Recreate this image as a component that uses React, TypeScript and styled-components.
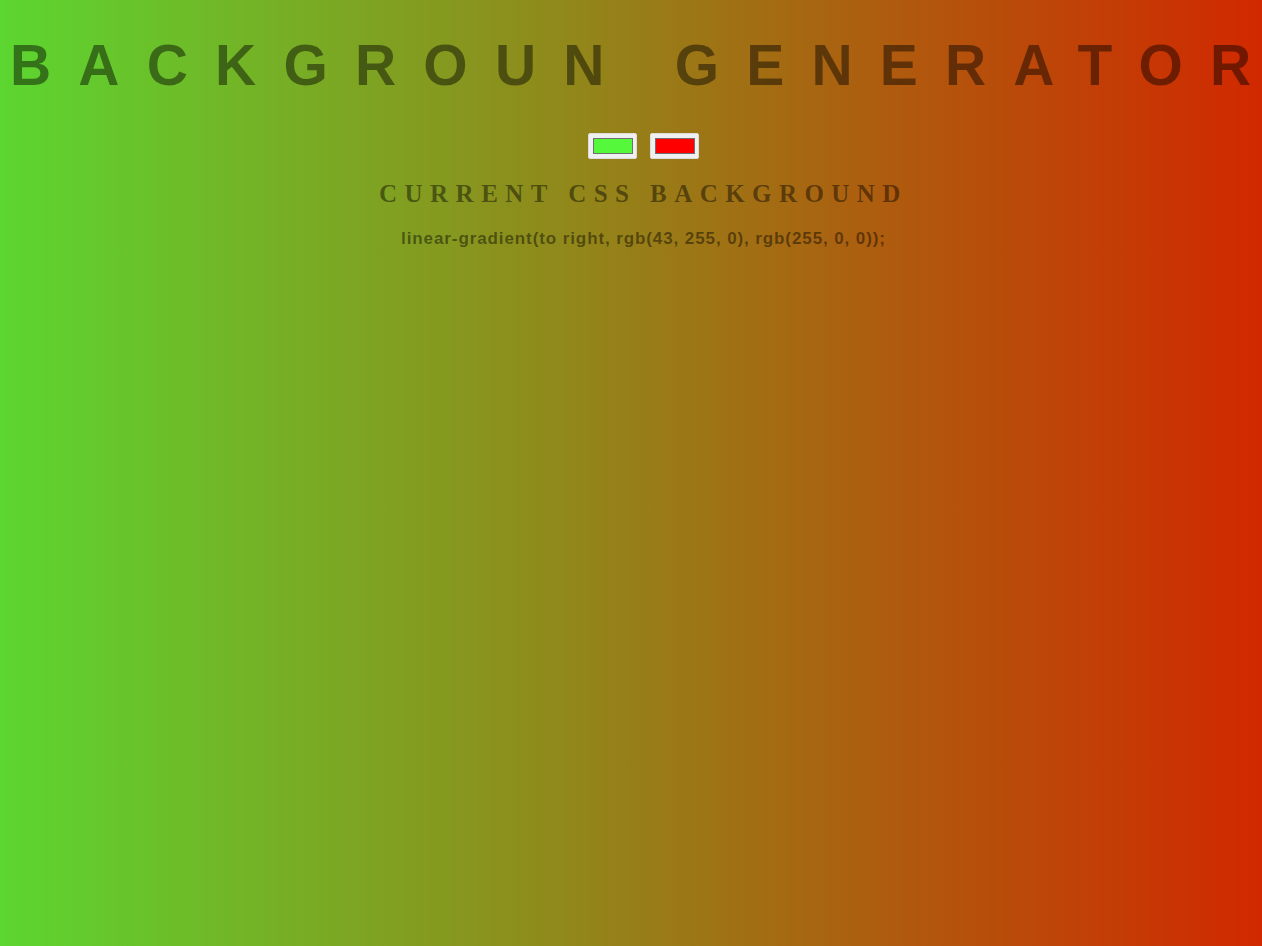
import styled, { createGlobalStyle } from "styled-components";

const GlobalStyle = createGlobalStyle`
  html, body {
    margin: 0;
    min-height: 100%;
  }
  body {
    min-height: 946px;
    overflow-x: hidden;
    background: linear-gradient(to right, #5cd630, #d12800);
    font-family: "Liberation Sans", Arial, sans-serif;
    color: rgba(0, 0, 0, 0.45);
    text-align: center;
  }
`;

const Page = styled.div`
  padding-top: 32px;
`;

const Title = styled.h1`
  margin: 0;
  padding-left: 10px;
  font-size: 57px;
  line-height: 66px;
  font-weight: bold;
  letter-spacing: 27.2px;
  white-space: nowrap;
  text-align: left;
`;

const Panel = styled.div`
  display: flex;
  flex-direction: column;
  align-items: center;
  padding-left: 25px;
`;

const Controls = styled.div`
  display: flex;
  gap: 13px;
  margin-top: 35px;
`;

const ColorInput = styled.input`
  box-sizing: border-box;
  width: 49px;
  height: 26px;
  padding: 0;
  border: 1px solid #dcdcdc;
  border-radius: 2px;
  background: #f0f0f0;
  cursor: pointer;

  &::-webkit-color-swatch-wrapper {
    padding: 4px 3.5px;
  }
  &::-webkit-color-swatch {
    border: 1px solid #6f6f6f;
    border-radius: 0;
  }
`;

const Subtitle = styled.h3`
  margin: 20px 0 0;
  font-family: "Liberation Serif", "Times New Roman", serif;
  font-size: 25px;
  line-height: 29px;
  font-weight: bold;
  letter-spacing: 7.45px;
`;

const Code = styled.h3`
  margin: 21px 0 0;
  font-size: 17px;
  line-height: 20px;
  font-weight: bold;
  letter-spacing: 0.9px;
`;

export default function App() {
  return (
    <>
      <GlobalStyle />
      <Page>
        <Title>BACKGROUN GENERATOR</Title>
        <Panel>
          <Controls>
            <ColorInput type="color" defaultValue="#56f83c" />
            <ColorInput type="color" defaultValue="#ff0000" />
          </Controls>
          <Subtitle>CURRENT CSS BACKGROUND</Subtitle>
          <Code>linear-gradient(to right, rgb(43, 255, 0), rgb(255, 0, 0));</Code>
        </Panel>
      </Page>
    </>
  );
}
